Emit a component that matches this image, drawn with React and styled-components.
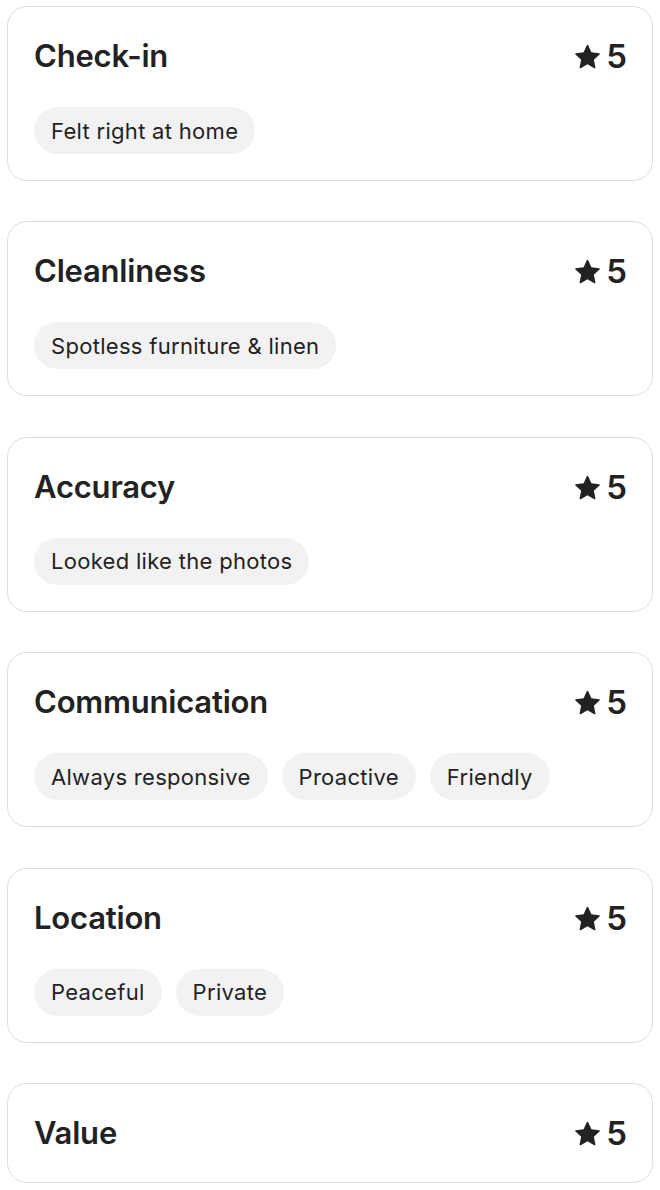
import styled, { createGlobalStyle } from 'styled-components';

const GlobalStyle = createGlobalStyle`
  * { box-sizing: border-box; }
  body {
    margin: 0;
    background: #fff;
    font-family: Inter, "Noto Sans", sans-serif;
    color: #222222;
  }
`;

const ratings = [
  { title: 'Check-in', score: 5, tags: ['Felt right at home'] },
  { title: 'Cleanliness', score: 5, tags: ['Spotless furniture & linen'] },
  { title: 'Accuracy', score: 5, tags: ['Looked like the photos'] },
  { title: 'Communication', score: 5, tags: ['Always responsive', 'Proactive', 'Friendly'] },
  { title: 'Location', score: 5, tags: ['Peaceful', 'Private'] },
  { title: 'Value', score: 5, tags: [] },
];

const Star = () => (
  <svg viewBox="0 0 32 32" width="25" height="25" aria-hidden="true">
    <path
      fill="currentColor"
      d="M15.094 1.579l-4.124 8.885-9.86 1.27a1 1 0 0 0-.542 1.736l7.293 6.565-1.965 9.852a1 1 0 0 0 1.483 1.061L16 25.951l8.625 4.997a1 1 0 0 0 1.482-1.06l-1.965-9.853 7.293-6.565a1 1 0 0 0-.541-1.735l-9.86-1.271-4.127-8.885a1 1 0 0 0-1.814 0z"
    />
  </svg>
);

const App = () => {
  return (
    <>
      <GlobalStyle />
      <Page>
        {ratings.map((r) => (
          <Card key={r.title}>
            <Header>
              <Title>{r.title}</Title>
              <Score>
                <Star />
                <span>{r.score}</span>
              </Score>
            </Header>
            {r.tags.length > 0 && (
              <Tags>
                {r.tags.map((t) => (
                  <Tag key={t}>{t}</Tag>
                ))}
              </Tags>
            )}
          </Card>
        ))}
      </Page>
    </>
  );
};

export default App;

const Page = styled.div`
  display: flex;
  flex-direction: column;
  gap: 40.4px;
  padding: 6px 7px;
`;

const Card = styled.div`
  border: 1px solid #dddddd;
  border-radius: 20px;
  padding: 26px;
  display: flex;
  flex-direction: column;
  gap: 28px;
`;

const Header = styled.div`
  display: flex;
  align-items: center;
  justify-content: space-between;
  height: 46px;
`;

const Title = styled.h2`
  margin: 0;
  font-size: 31px;
  font-weight: 600;
  letter-spacing: -0.2px;
  line-height: 46px;
`;

const Score = styled.div`
  display: flex;
  align-items: center;
  gap: 6px;
  margin-right: -1px;
  font-size: 33px;
  font-weight: 600;
  line-height: 46px;

  svg {
    margin-top: 1px;
  }
`;

const Tags = styled.div`
  display: flex;
  flex-wrap: wrap;
  gap: 14px;
`;

const Tag = styled.span`
  background: #f2f2f2;
  border-radius: 24px;
  height: 47px;
  padding: 0 17px;
  display: flex;
  align-items: center;
  font-size: 22px;
  font-weight: 400;
  letter-spacing: 0.3px;
`;
